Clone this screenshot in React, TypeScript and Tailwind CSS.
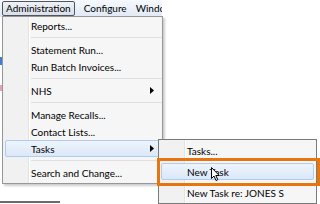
import React from "react";

const font = { fontFamily: 'Lato, "Noto Sans", sans-serif' };

function Arrow() {
  return (
    <svg width="4" height="7" viewBox="0 0 4 7" className="absolute right-[8px]">
      <path d="M0 0 L4 3.5 L0 7 Z" fill="#000" />
    </svg>
  );
}

function Item({
  label,
  arrow,
  hl,
  tall,
}: {
  label: string;
  arrow?: boolean;
  hl?: boolean;
  tall?: boolean;
}) {
  return (
    <div className={`relative flex items-center ${tall ? "h-[21px]" : "h-[17px]"}`}>
      {hl && (
        <div
          className={`absolute inset-x-[2px] rounded-[2px] border border-[#aeccef] bg-gradient-to-b from-[#eef4fc] to-[#dbe8f8] ${
            tall ? "inset-y-[2px]" : "inset-y-0"
          }`}
        />
      )}
      <span className="relative pl-[28px] text-[10px] text-black leading-none">{label}</span>
      {arrow && <Arrow />}
    </div>
  );
}

function Sep() {
  return (
    <div className="h-[7px] flex items-center pl-[28px]">
      <div className="w-full h-[2px] border-t border-[#e0e0e0] border-b-white" />
    </div>
  );
}

function Gutter() {
  return (
    <>
      <div className="absolute left-0 top-0 bottom-0 w-[25px] bg-[#f1f1f1]" />
      <div className="absolute left-[25px] top-0 bottom-0 w-[2px] border-l border-[#e2e3e3] bg-white" />
    </>
  );
}

function Cursor() {
  return (
    <svg width="10" height="15" viewBox="0 0 10 15" className="absolute left-[211px] top-[167px]">
      <path
        d="M0.5 0.5 L0.5 11.5 L3 9 L5 13.5 L6.8 12.7 L4.8 8.5 L8.2 8.5 Z"
        fill="#fff"
        stroke="#000"
        strokeWidth="1"
      />
    </svg>
  );
}

export default function App() {
  return (
    <div className="relative w-[320px] h-[204px] overflow-hidden bg-white" style={font}>
      <div className="flex flex-col h-full">
        {/* menu bar */}
        <div className="w-[162px] h-[17px] flex items-center gap-[9px] pl-[2px] bg-gradient-to-b from-[#f6f9fd] to-[#e1e9f5] text-[10px] text-black whitespace-nowrap overflow-hidden">
          <div className="h-[15px] px-[3px] flex items-center rounded-[2px] border border-[#50555c] bg-gradient-to-b from-[#eef1f6] to-[#d9e0ea]">
            Administration
          </div>
          <span>Configure</span>
          <span>Window</span>
        </div>
        {/* underlying window edge */}
        <div className="flex-1 flex">
          <div className="w-[2px] flex flex-col">
            <div className="h-[40px]" />
            <div className="h-[8px] bg-[#3c7fd0]" />
            <div className="h-[20px]" />
            <div className="h-[6px] bg-[#e8a0c0]" />
          </div>
        </div>
        <div className="h-[2px] w-[60px] bg-[#6b6b6b] mb-[1px]" />
      </div>

      {/* main menu */}
      <div className="absolute left-[2px] top-[16px] w-[161px] border border-[#979797] bg-[#f6f6f6] shadow-[2px_2px_2px_rgba(0,0,0,0.2)] pb-[2px]">
        <Gutter />
        <Item label="Reports..." />
        <Sep />
        <Item label="Statement Run..." />
        <Item label="Run Batch Invoices..." />
        <Sep />
        <Item label="NHS" arrow />
        <Sep />
        <Item label="Manage Recalls..." />
        <Item label="Contact Lists..." />
        <Item label="Tasks" arrow hl />
        <Sep />
        <Item label="Search and Change..." />
      </div>

      {/* submenu */}
      <div className="absolute left-[158px] top-[139px] w-[159px] border border-[#7a7a7a] bg-[#f6f6f6]">
        <Gutter />
        <Item label="Tasks..." tall />
        <Item label="New Task" hl tall />
        <Item label="New Task re: JONES S" tall />
      </div>

      {/* orange annotation */}
      <div className="absolute left-[157px] top-[158px] w-[163px] h-[28px] border-[3px] border-[#e8760f]" />
      <Cursor />
    </div>
  );
}
